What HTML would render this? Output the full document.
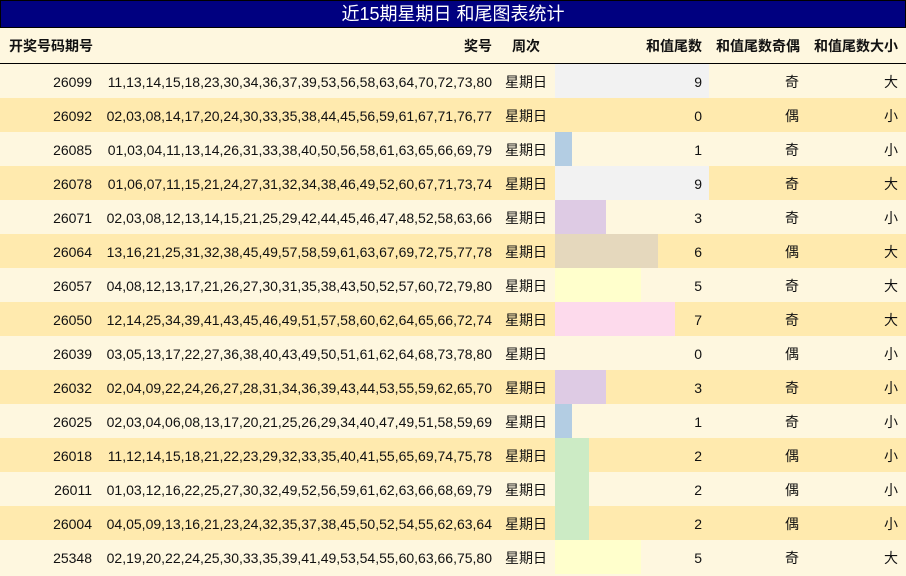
<!DOCTYPE html><html><head><meta charset="utf-8"><style>
body{margin:0;width:906px;height:575px;background:#fef7df;font-family:"Liberation Sans","Noto Sans CJK SC",sans-serif;font-size:14px;color:#111;position:relative;overflow:hidden}
.t{position:absolute;left:0;top:0;width:904px;height:26px;background:#000080;border:1px solid #000;color:#fff;font-size:18px;text-align:center;line-height:27px}
.h{position:absolute;top:28px;height:35px;line-height:37px;font-weight:bold;white-space:nowrap}
.hl{position:absolute;top:63px;left:0;width:906px;height:1px;background:#000}
.r{position:absolute;left:0;width:906px;height:34px;line-height:36px}
.r div{position:absolute;top:0;height:34px;white-space:nowrap}
</style></head><body>
<div class="t">近15期星期日 和尾图表统计</div>
<div class="h" style="left:9px">开奖号码期号</div>
<div class="h" style="left:400px;width:92px;text-align:right">奖号</div>
<div class="h" style="left:497px;width:58px;text-align:center">周次</div>
<div class="h" style="left:600px;width:102px;text-align:right">和值尾数</div>
<div class="h" style="left:716px">和值尾数奇偶</div>
<div class="h" style="left:814px">和值尾数大小</div>
<div class="hl"></div>
<div id="rows"></div>
<script>
var d=[["26099","11,13,14,15,18,23,30,34,36,37,39,53,56,58,63,64,70,72,73,80",9,"奇","大"],
["26092","02,03,08,14,17,20,24,30,33,35,38,44,45,56,59,61,67,71,76,77",0,"偶","小"],
["26085","01,03,04,11,13,14,26,31,33,38,40,50,56,58,61,63,65,66,69,79",1,"奇","小"],
["26078","01,06,07,11,15,21,24,27,31,32,34,38,46,49,52,60,67,71,73,74",9,"奇","大"],
["26071","02,03,08,12,13,14,15,21,25,29,42,44,45,46,47,48,52,58,63,66",3,"奇","小"],
["26064","13,16,21,25,31,32,38,45,49,57,58,59,61,63,67,69,72,75,77,78",6,"偶","大"],
["26057","04,08,12,13,17,21,26,27,30,31,35,38,43,50,52,57,60,72,79,80",5,"奇","大"],
["26050","12,14,25,34,39,41,43,45,46,49,51,57,58,60,62,64,65,66,72,74",7,"奇","大"],
["26039","03,05,13,17,22,27,36,38,40,43,49,50,51,61,62,64,68,73,78,80",0,"偶","小"],
["26032","02,04,09,22,24,26,27,28,31,34,36,39,43,44,53,55,59,62,65,70",3,"奇","小"],
["26025","02,03,04,06,08,13,17,20,21,25,26,29,34,40,47,49,51,58,59,69",1,"奇","小"],
["26018","11,12,14,15,18,21,22,23,29,32,33,35,40,41,55,65,69,74,75,78",2,"偶","小"],
["26011","01,03,12,16,22,25,27,30,32,49,52,56,59,61,62,63,66,68,69,79",2,"偶","小"],
["26004","04,05,09,13,16,21,23,24,32,35,37,38,45,50,52,54,55,62,63,64",2,"偶","小"],
["25348","02,19,20,22,24,25,30,33,35,39,41,49,53,54,55,60,63,66,75,80",5,"奇","大"]];
var c={0:"",1:"#b3cde3",2:"#ccebc5",3:"#decbe4",5:"#ffffcc",6:"#e5d8bd",7:"#fddaec",9:"#f2f2f2"};
var h="";d.forEach(function(r,i){
h+='<div class="r" style="top:'+(64+i*34)+'px;background:'+(i%2?'#ffeaae':'#fef7df')+'">'+
'<div style="left:0;width:92px;text-align:right">'+r[0]+'</div>'+
'<div style="left:100px;width:392px;text-align:right">'+r[1]+'</div>'+
'<div style="left:497px;width:58px;text-align:center">星期日</div>'+
(r[2]?'<div style="left:555px;width:'+Math.round(r[2]/9*154)+'px;background:'+c[r[2]]+'"></div>':'')+
'<div style="left:600px;width:102px;text-align:right">'+r[2]+'</div>'+
'<div style="left:709px;width:166px;text-align:center">'+r[3]+'</div>'+
'<div style="left:800px;width:98px;text-align:right">'+r[4]+'</div></div>';});
document.getElementById("rows").innerHTML=h;
</script>
</body></html>
